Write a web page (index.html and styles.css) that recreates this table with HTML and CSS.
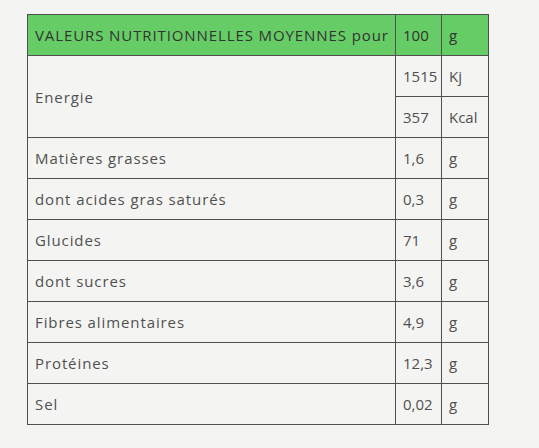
FILE: index.html
```html
<!DOCTYPE html>
<html lang="fr">
<head>
    <meta charset="UTF-8">
    <title>Valeurs nutritionnelles</title>
    <link rel="stylesheet" href="styles.css">
</head>
<body>
<table class="nutri">
    <tr class="head">
        <td class="label">VALEURS NUTRITIONNELLES MOYENNES pour</td>
        <td class="val">100</td>
        <td class="unit">g</td>
    </tr>
    <tr>
        <td class="label" rowspan="2">Energie</td>
        <td class="val">1515</td>
        <td class="unit">Kj</td>
    </tr>
    <tr>
        <td class="val">357</td>
        <td class="unit">Kcal</td>
    </tr>
    <tr><td class="label">Matières grasses</td><td class="val">1,6</td><td class="unit">g</td></tr>
    <tr><td class="label">dont acides gras saturés</td><td class="val">0,3</td><td class="unit">g</td></tr>
    <tr><td class="label">Glucides</td><td class="val">71</td><td class="unit">g</td></tr>
    <tr><td class="label">dont sucres</td><td class="val">3,6</td><td class="unit">g</td></tr>
    <tr><td class="label">Fibres alimentaires</td><td class="val">4,9</td><td class="unit">g</td></tr>
    <tr><td class="label">Protéines</td><td class="val">12,3</td><td class="unit">g</td></tr>
    <tr><td class="label">Sel</td><td class="val">0,02</td><td class="unit">g</td></tr>
</table>
</body>
</html>
```

FILE: styles.css
```css
html, body { background-color: #f4f5f2; }
body { margin: 0; padding: 14px 0 0 27px; font-family: "Open Sans", sans-serif; font-size: 15px; letter-spacing: 0.9px; color: #505050; }
.nutri { border-collapse: collapse; width: 461px; table-layout: fixed; }
.nutri td { border: 1px solid #505050; height: 41px; padding: 0 7px; box-sizing: border-box; vertical-align: middle; white-space: nowrap; }
.nutri .label { width: 368px; }
.nutri .val { width: 46px; letter-spacing: 0; }
.nutri .unit { width: 47px; letter-spacing: 0; }
.head td { background-color: #66cc66; color: #333; }
```
